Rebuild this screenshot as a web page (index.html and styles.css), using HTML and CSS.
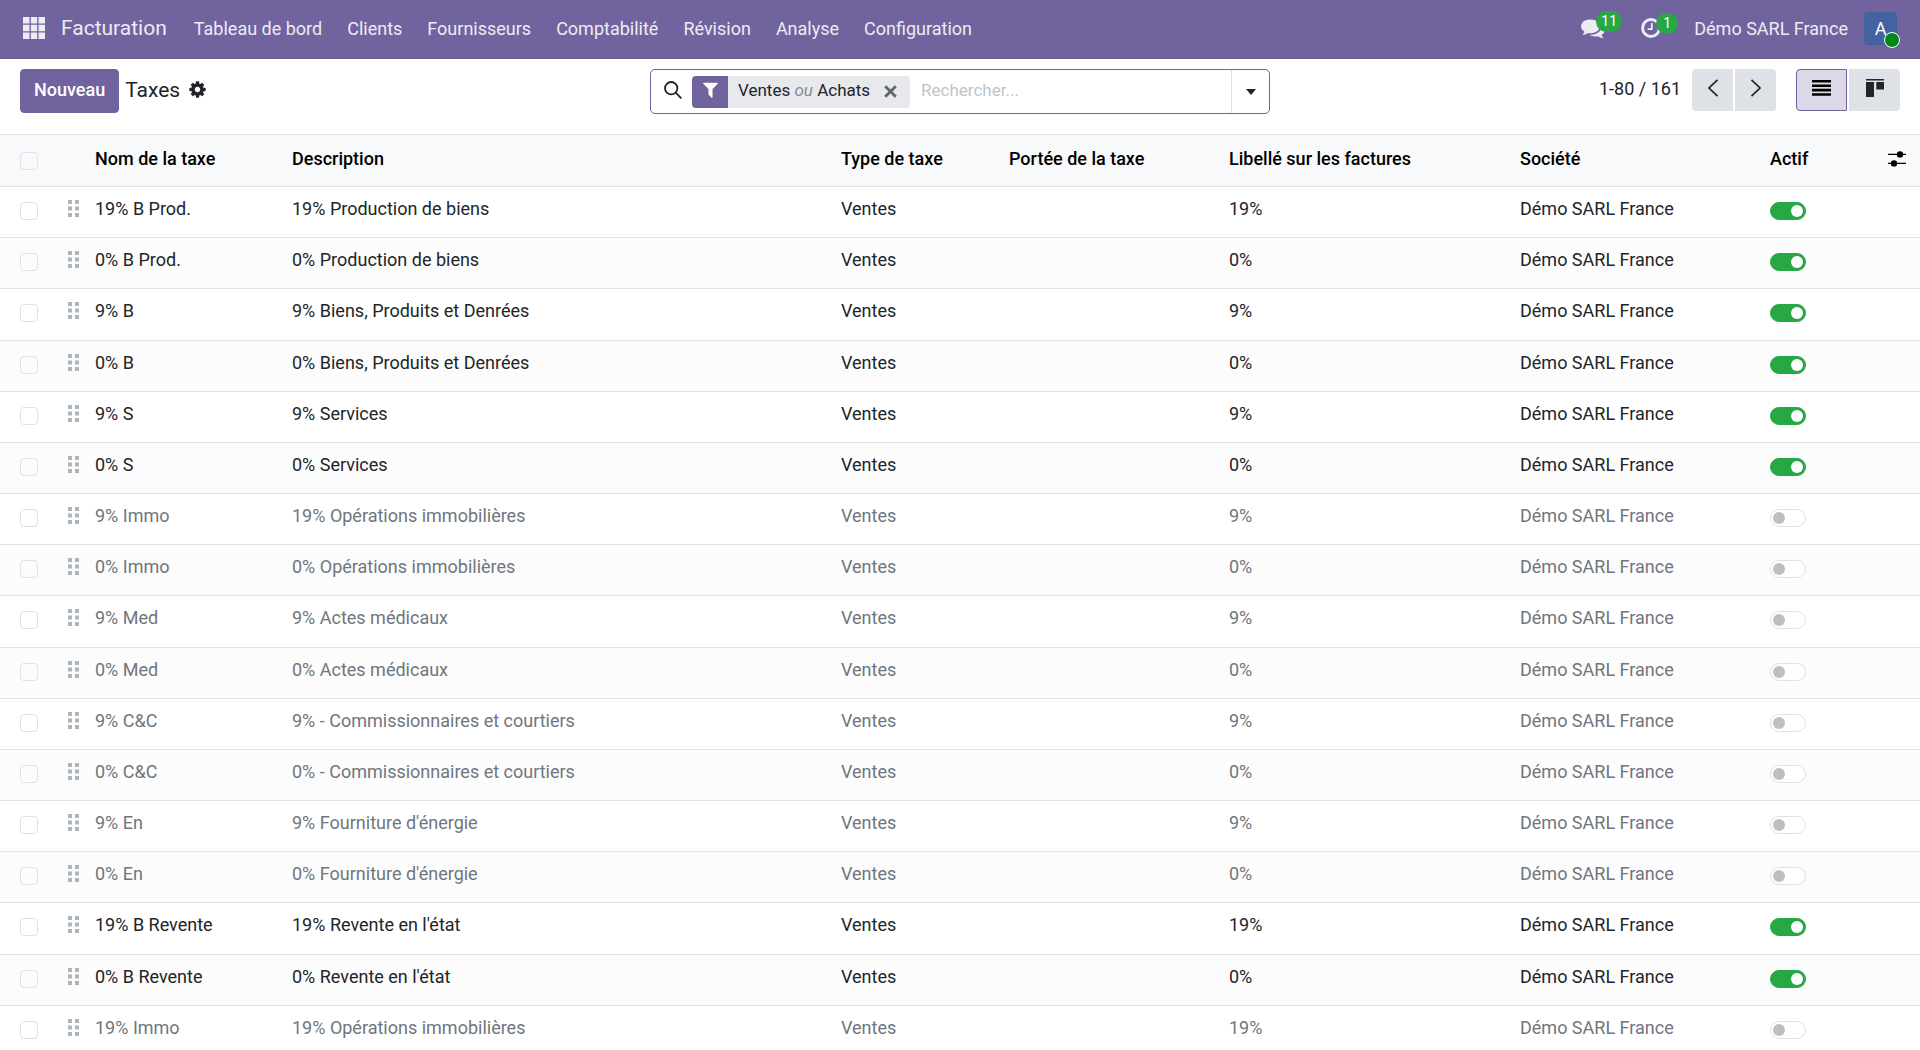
FILE: index.html
```html
<!DOCTYPE html>
<html lang="fr">
<head>
    <meta charset="UTF-8">
    <meta name="viewport" content="width=device-width, initial-scale=1.0">
    <title>Taxes - Facturation</title>
    <link rel="stylesheet" href="styles.css">
</head>
<body>
    <header class="navbar">
        <button class="apps-button" aria-label="Applications">
            <svg width="22" height="22" viewBox="0 0 22 22" fill="currentColor">
                <path d="M0 0h6.5v6.5H0zM7.8 0h6.4v6.5H7.8zM15.5 0H22v6.5h-6.5zM0 7.8h6.5v6.4H0zM7.8 7.8h6.4v6.4H7.8zM15.5 7.8H22v6.4h-6.5zM0 15.5h6.5V22H0zM7.8 15.5h6.4V22H7.8zM15.5 15.5H22V22h-6.5z"/>
            </svg>
        </button>
        <a class="brand" href="#">Facturation</a>
        <nav class="menu">
            <a href="#">Tableau de bord</a>
            <a href="#">Clients</a>
            <a href="#">Fournisseurs</a>
            <a href="#">Comptabilité</a>
            <a href="#">Révision</a>
            <a href="#">Analyse</a>
            <a href="#">Configuration</a>
        </nav>
        <div class="systray">
            <button class="tray-button" aria-label="Discussions">
                <svg width="24" height="24" viewBox="0 0 1792 1792" fill="currentColor">
                    <path d="M1408 768q0 139-94 257t-256.5 186.5-353.5 68.5q-86 0-176-16-124 88-278 128-36 9-86 16h-3q-11 0-20.5-8t-11.5-21q-1-3-1-6.5t.5-6.5 2-6l2.5-5 3.5-5.5 4-5 4.5-5 4-4.5q5-6 23-25t26-29.5 22.5-29 25-38.5 20.5-44q-124-72-195-177t-71-224q0-139 94-257t256.5-186.5 353.5-68.5 353.5 68.5 256.5 186.5 94 257zm384 256q0 120-71 224.5t-195 176.5q10 24 20.5 44t25 38.5 22.5 29 26 29.5 23 25q1 1 4 4.5t4.5 5 4 5 3.5 5.5l2.5 5 2 6 .5 6.5-1 6.5q-3 14-13 22t-22 7q-50-7-86-16-154-40-278-128-90 16-176 16-271 0-472-132 58 4 88 4 161 0 309-45t264-129q125-92 192-212t67-254q0-77-23-152 129 71 204 178t75 230z"/>
                </svg>
                <span class="badge">11</span>
            </button>
            <button class="tray-button" aria-label="Activités">
                <svg width="20" height="20" viewBox="0 0 20 20" fill="none" stroke="currentColor">
                    <circle cx="10" cy="10" r="8.4" stroke-width="3"/>
                    <path d="M10.8 5v6.2H6.6" stroke-width="1.8"/>
                </svg>
                <span class="badge">1</span>
            </button>
            <a class="company" href="#">Démo SARL France</a>
            <button class="avatar" aria-label="Utilisateur">A<span class="status"></span></button>
        </div>
    </header>

    <section class="control-panel">
        <div class="breadcrumb">
            <button class="btn-primary">Nouveau</button>
            <h1>Taxes</h1>
            <button class="gear" aria-label="Actions">
                <svg width="19" height="19" viewBox="0 0 1792 1792" fill="currentColor">
                    <path d="M1152 896q0-106-75-181t-181-75-181 75-75 181 75 181 181 75 181-75 75-181zm512-109v222q0 12-8 23t-20 13l-185 28q-19 54-39 91 35 50 107 138 10 12 10 25t-9 23q-27 37-99 108t-94 71q-12 0-26-9l-138-108q-44 23-91 38-16 136-29 186-7 28-36 28h-222q-14 0-24.5-8.5t-11.5-21.5l-28-184q-49-16-90-37l-141 107q-10 9-25 9-14 0-25-11-126-114-165-168-7-10-7-23 0-12 8-23 15-21 51-66.5t54-70.5q-27-50-41-99l-183-27q-13-2-21-12.5t-8-23.5v-222q0-12 8-23t19-13l186-28q14-46 39-92-40-57-107-138-10-12-10-24 0-10 9-23 26-36 98.5-107.5t94.5-71.5q13 0 26 10l138 107q44-23 91-38 16-136 29-186 7-28 36-28h222q14 0 24.5 8.5t11.5 21.5l28 184q49 16 90 37l142-107q9-9 24-9 13 0 25 10 129 119 165 170 7 8 7 22 0 12-8 23-15 21-51 66.5t-54 70.5q26 50 41 98l183 28q13 2 21 12.5t8 23.5z"/>
                </svg>
            </button>
        </div>

        <div class="search">
            <svg class="search-icon" width="18" height="18" viewBox="0 0 18 18" fill="none" stroke="currentColor" stroke-width="1.8">
                <circle cx="7.2" cy="7.2" r="6.2"/>
                <path d="M11.7 11.7l5.6 5.6"/>
            </svg>
            <div class="facet">
                <span class="facet-icon">
                    <svg width="19" height="19" viewBox="0 0 1792 1792" fill="currentColor">
                        <path d="M1595 295q17 41-14 70l-493 493v742q0 42-39 59-13 5-25 5-27 0-45-19l-256-256q-19-19-19-45v-486l-493-493q-31-29-14-70 17-39 59-39h1280q42 0 59 39z"/>
                    </svg>
                </span>
                <span class="facet-label">Ventes <em>ou</em> Achats</span>
                <button class="facet-remove" aria-label="Retirer">
                    <svg width="13" height="13" viewBox="0 0 13 13" fill="none" stroke="currentColor" stroke-width="2.8">
                        <path d="M1.2 1.2l10.6 10.6M11.8 1.2L1.2 11.8"/>
                    </svg>
                </button>
            </div>
            <input type="search" class="search-input" placeholder="Rechercher..." aria-label="Rechercher">
            <button class="search-toggle" aria-label="Filtres">
                <svg width="10" height="6" viewBox="0 0 10 6" fill="currentColor"><path d="M0 0h10L5 6z"/></svg>
            </button>
        </div>

        <div class="actions">
            <span class="pager">1-80 / 161</span>
            <div class="button-group">
                <button aria-label="Précédent">
                    <svg width="12" height="18" viewBox="0 0 12 18" fill="none" stroke="currentColor" stroke-width="1.7"><path d="M10.5 .8L2 9l8.500 8.200"/></svg>
                </button>
                <button aria-label="Suivant">
                    <svg width="12" height="18" viewBox="0 0 12 18" fill="none" stroke="currentColor" stroke-width="1.7"><path d="M1.500 .8L10 9l-8.500 8.200"/></svg>
                </button>
            </div>
            <div class="button-group views">
                <button class="active" aria-label="Liste">
                    <svg width="19" height="16" viewBox="0 0 19 16" fill="currentColor"><path d="M0 0h19v2.600H0zM0 4.400h19V7H0zM0 8.800h19v2.600H0zM0 13.200h19v2.600H0z"/></svg>
                </button>
                <button aria-label="Kanban">
                    <svg width="18" height="18" viewBox="0 0 18 18" fill="currentColor"><path d="M0 0h18v1.400H0zM0 3h8v15H0zM10.300 3H18v7.600h-7.700z"/></svg>
                </button>
            </div>
        </div>
    </section>

    <main class="list">
        <table id="taxTable">
            <thead>
                <tr>
                    <th class="col-select"><input type="checkbox" class="check" aria-label="Tout sélectionner"></th>
                    <th class="col-handle"></th>
                    <th class="col-name">Nom de la taxe</th>
                    <th>Description</th>
                    <th class="col-type">Type de taxe</th>
                    <th class="col-scope">Portée de la taxe</th>
                    <th class="col-label">Libellé sur les factures</th>
                    <th class="col-company">Société</th>
                    <th class="col-active">Actif</th>
                    <th class="col-options">
                        <button aria-label="Colonnes">
                            <svg width="18" height="16" viewBox="0 0 18 16" fill="currentColor">
                                <path d="M0 2.800h18v1.200H0zM0 11.800h18v1.200H0z"/>
                                <circle cx="12" cy="3.400" r="3.200"/>
                                <circle cx="6" cy="12.400" r="3.200"/>
                            </svg>
                        </button>
                    </th>
                </tr>
            </thead>
            <tbody></tbody>
        </table>
    </main>

    <script>
        const taxes = [
            { name: '19% B Prod.', description: '19% Production de biens', label: '19%', active: true },
            { name: '0% B Prod.', description: '0% Production de biens', label: '0%', active: true },
            { name: '9% B', description: '9% Biens, Produits et Denrées', label: '9%', active: true },
            { name: '0% B', description: '0% Biens, Produits et Denrées', label: '0%', active: true },
            { name: '9% S', description: '9% Services', label: '9%', active: true },
            { name: '0% S', description: '0% Services', label: '0%', active: true },
            { name: '9% Immo', description: '19% Opérations immobilières', label: '9%', active: false },
            { name: '0% Immo', description: '0% Opérations immobilières', label: '0%', active: false },
            { name: '9% Med', description: '9% Actes médicaux', label: '9%', active: false },
            { name: '0% Med', description: '0% Actes médicaux', label: '0%', active: false },
            { name: '9% C&amp;C', description: '9% - Commissionnaires et courtiers', label: '9%', active: false },
            { name: '0% C&amp;C', description: '0% - Commissionnaires et courtiers', label: '0%', active: false },
            { name: '9% En', description: "9% Fourniture d'énergie", label: '9%', active: false },
            { name: '0% En', description: "0% Fourniture d'énergie", label: '0%', active: false },
            { name: '19% B Revente', description: "19% Revente en l'état", label: '19%', active: true },
            { name: '0% B Revente', description: "0% Revente en l'état", label: '0%', active: true },
            { name: '19% Immo', description: '19% Opérations immobilières', label: '19%', active: false }
        ];

        const tbody = document.querySelector('#taxTable tbody');
        taxes.forEach(tax => {
            const tr = document.createElement('tr');
            tr.classList.toggle('muted', !tax.active);
            tr.innerHTML = `
                <td><input type="checkbox" class="check" aria-label="${tax.name}"></td>
                <td>
                    <svg class="handle" width="11" height="17" viewBox="0 0 11 17" fill="currentColor">
                        <path d="M0 0h4v4H0zM7 0h4v4H7zM0 6.500h4v4H0zM7 6.500h4v4H7zM0 13h4v4H0zM7 13h4v4H7z"/>
                    </svg>
                </td>
                <td>${tax.name}</td>
                <td>${tax.description}</td>
                <td>Ventes</td>
                <td></td>
                <td>${tax.label}</td>
                <td>Démo SARL France</td>
                <td><input type="checkbox" class="switch" aria-label="Actif" ${tax.active ? 'checked' : ''}></td>
                <td></td>
            `;
            tr.querySelector('.switch').addEventListener('change', e => {
                tr.classList.toggle('muted', !e.target.checked);
            });
            tbody.appendChild(tr);
        });
    </script>
</body>
</html>
```
FILE: styles.css
```css
* {
    box-sizing: border-box;
}
body {
    margin: 0;
    height: 100vh;
    display: flex;
    flex-direction: column;
    overflow: hidden;
    font-family: Roboto, "Liberation Sans", sans-serif;
    font-size: 18px;
    line-height: 27px;
    color: #212529;
    background-color: #fff;
}
button {
    display: flex;
    align-items: center;
    justify-content: center;
    padding: 0;
    border: none;
    background: none;
    font: inherit;
    color: inherit;
    cursor: pointer;
}
a {
    color: inherit;
    text-decoration: none;
}
svg {
    display: block;
    flex: none;
}

/* top bar */
.navbar {
    display: flex;
    align-items: center;
    flex: none;
    height: 59px;
    padding: 0 23px 2px;
    background-color: #71639e;
    border-bottom: 1px solid #665a8f;
    color: #edebf3;
}
.brand {
    margin: 0 15px 0 16px;
    font-size: 21px;
}
.menu {
    display: flex;
    gap: 25px;
    padding-left: 12px;
}
.systray {
    display: flex;
    align-items: center;
    margin-left: auto;
}
.tray-button {
    position: relative;
    margin-right: 36px;
}
.tray-button + .tray-button {
    margin-right: 33px;
}
.badge {
    position: absolute;
    left: 15px;
    top: -5px;
    min-width: 22px;
    padding: 0 5px;
    border-radius: 11px;
    background-color: #28a745;
    color: #fff;
    font-size: 14px;
    line-height: 21px;
}
.avatar {
    position: relative;
    width: 33px;
    height: 33px;
    margin-left: 16px;
    border-radius: 4px;
    background-color: #4562a0;
    color: #fff;
}
.status {
    position: absolute;
    right: -3px;
    bottom: -3px;
    width: 16px;
    height: 16px;
    border: 1px solid #fff;
    border-radius: 50%;
    background-color: #008818;
}

/* control panel */
.control-panel {
    display: grid;
    grid-template-columns: 1fr minmax(0, 620px) 1fr;
    align-items: start;
    flex: none;
    padding: 10px 20px 20px;
}
.breadcrumb {
    display: flex;
    align-items: center;
}
.btn-primary {
    height: 44px;
    padding: 0 13px 3px;
    border: 1px solid #71639e;
    border-radius: 4px;
    background-color: #71639e;
    color: #fff;
    font-weight: 500;
}
h1 {
    margin: 0 8px 2px 6px;
    font-size: 21px;
    font-weight: 400;
}
.gear {
    margin-bottom: 3px;
}
.search {
    display: flex;
    align-items: center;
    height: 45px;
    border: 1px solid #71639e;
    border-radius: 5px;
}
.search-icon {
    margin: 0 10px 4px 13px;
}
.facet {
    display: flex;
    height: 32px;
    border-radius: 4px;
    overflow: hidden;
    background-color: #e7e9ed;
}
.facet-icon {
    display: flex;
    align-items: center;
    justify-content: center;
    width: 36px;
    padding-bottom: 4px;
    background-color: #71639e;
    color: #fff;
}
.facet-label {
    padding: 1px 14px 0 10px;
    font-size: 17px;
}
.facet-label em {
    color: #868d94;
}
.facet-remove {
    padding-right: 13px;
    color: #5f666d;
}
.search-input {
    flex: 1;
    min-width: 0;
    padding: 0 11px 2px;
    border: none;
    outline: none;
    background: none;
    font: inherit;
    font-size: 17px;
}
.search-input::placeholder {
    color: #bdc4cb;
}
.search-toggle {
    width: 38px;
    height: 43px;
    border-left: 1px solid #dee2e6;
}
.actions {
    display: flex;
    justify-content: flex-end;
}
.pager {
    padding: 6px 11px 0 0;
}
.button-group {
    display: flex;
    gap: 2px;
}
.button-group button {
    width: 41px;
    height: 42px;
    padding-bottom: 4px;
    background-color: #dee2e6;
}
.button-group button:first-child {
    border-radius: 4px 0 0 4px;
}
.button-group button:last-child {
    border-radius: 0 4px 4px 0;
}
.views {
    margin-left: 20px;
}
.views button {
    width: 51px;
}
.button-group .active {
    border: 1px solid #71639e;
    background-color: #dcd8e7;
    color: #000;
}

/* tax list, the rows share the height left under the control panel */
.list {
    flex: 1;
    min-height: 0;
    border-top: 1px solid #dee2e6;
}
table {
    width: 100%;
    height: calc(100vh - 128px);
    table-layout: fixed;
    border-collapse: separate;
    border-spacing: 0;
}
th, td {
    padding: 8px 6px 0;
    border-bottom: 1px solid #dee2e6;
    text-align: left;
    vertical-align: top;
    white-space: nowrap;
}
th {
    height: 52px;
    padding-top: 10px;
    background-color: #f8f9fa;
    color: #000;
    font-weight: 500;
}
tbody tr:nth-child(even) {
    background-color: #fcfcfc;
}
.muted {
    color: #6f767d;
}
.col-select {
    width: 62px;
}
th:first-child, td:first-child {
    padding-left: 20px;
}
.col-handle {
    width: 27px;
}
.col-name {
    width: 197px;
}
.col-type {
    width: 168px;
}
.col-scope {
    width: 220px;
}
.col-label {
    width: 291px;
}
.col-company {
    width: 250px;
}
.col-active {
    width: 118px;
}
.col-options {
    width: 38px;
}
.col-options button {
    height: 27px;
}
.handle {
    margin-top: 5px;
    color: #adb5bd;
}
.check, .switch {
    display: block;
    appearance: none;
    height: 18px;
    margin: 7px 0 0;
    border: 1px solid #dee2e6;
    background-color: #fff;
    cursor: pointer;
}
.check {
    width: 18px;
    border-radius: 4px;
    background-color: transparent;
}
.check:checked {
    background-color: #71639e;
}
.switch {
    width: 36px;
    padding: 2px;
    border-radius: 9px;
}
.switch::before {
    content: "";
    display: block;
    width: 12px;
    height: 12px;
    border-radius: 50%;
    background-color: #bfbfbf;
}
.switch:checked {
    border-color: #28a745;
    background-color: #28a745;
}
.switch:checked::before {
    margin-left: auto;
    background-color: #fff;
}
```
